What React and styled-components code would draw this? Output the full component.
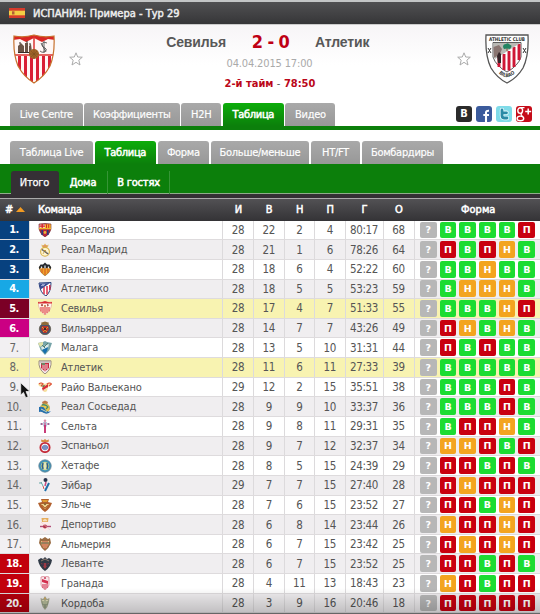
import React from "react";
import styled, { createGlobalStyle } from "styled-components";

const GlobalStyle = createGlobalStyle`
  * {
    box-sizing: border-box;
  }
  body {
    margin: 0;
    background: #fff;
    overflow: hidden;
    font-family: "DejaVu Sans Condensed", "DejaVu Sans", sans-serif;
    font-stretch: condensed;
    font-size: 12px;
    color: #555;
  }
`;

const teams = [
  ["Барселона", 28, 22, 2, 4, "80:17", 68, "ВВВВП", "barcelona"],
  ["Реал Мадрид", 28, 21, 1, 6, "78:26", 64, "ПВПНВ", "real"],
  ["Валенсия", 28, 18, 6, 4, "52:22", 60, "ВВНВВ", "valencia"],
  ["Атлетико", 28, 18, 5, 5, "53:23", 59, "ВНННВ", "atletico"],
  ["Севилья", 28, 17, 4, 7, "51:33", 55, "ВВВНП", "sevilla"],
  ["Вильярреал", 28, 14, 7, 7, "43:26", 49, "ПНВНВ", "villarreal"],
  ["Малага", 28, 13, 5, 10, "31:31", 44, "ПВПВВ", "malaga"],
  ["Атлетик", 28, 11, 6, 11, "27:33", 39, "ВВВВВ", "athletic"],
  ["Райо Вальекано", 29, 12, 2, 15, "35:51", 38, "ВВВПВ", "rayo"],
  ["Реал Сосьедад", 28, 9, 9, 10, "33:37", 36, "ВВВПВ", "sociedad"],
  ["Сельта", 28, 9, 8, 11, "29:31", 35, "ВППНВ", "celta"],
  ["Эспаньол", 28, 9, 7, 12, "32:37", 34, "ННПВП", "espanyol"],
  ["Хетафе", 28, 8, 5, 15, "24:39", 29, "ППВПВ", "getafe"],
  ["Эйбар", 29, 7, 7, 15, "27:40", 28, "ПНППП", "eibar"],
  ["Эльче", 28, 7, 6, 15, "23:52", 27, "ППВНП", "elche"],
  ["Депортиво", 28, 6, 8, 14, "23:44", 26, "НППНП", "deportivo"],
  ["Альмерия", 28, 6, 7, 15, "23:42", 25, "ПНПНП", "almeria"],
  ["Леванте", 28, 6, 7, 15, "23:52", 25, "ППВПВ", "levante"],
  ["Гранада", 28, 4, 11, 13, "18:43", 23, "НПВПП", "granada"],
  ["Кордоба", 28, 3, 9, 16, "20:46", 18, "ППППП", "cordoba"],
];

const rankColors = {
  1: "#07417f",
  2: "#07417f",
  3: "#07417f",
  4: "#18a8e5",
  5: "#7b0026",
  6: "#cb0083",
  18: "#c2000d",
  19: "#c2000d",
  20: "#b5000d",
};

const formColors = { В: "#1cdc32", Н: "#f3a41f", П: "#c9000f", "?": "#b7b7b7" };

const shield = "M1 1Q7 0 13 1V6Q12 11 7 14Q2 11 1 6Z";

const crests = {
  barcelona: (
    <>
      <path d={shield} fill="#b5243c" stroke="#6b2b2b" strokeWidth=".6" />
      <path d="M1.5 1.5H7V5H1.5Z" fill="#f4d5c0" />
      <path d="M4.2 1V5.5M1.5 3.2H7" stroke="#d8202c" strokeWidth="1.3" />
      <path d="M7 1.3h5.7V5H7Z" fill="#f3c22c" />
      <path d="M8.5 1.3V5M10.7 1.3V5" stroke="#d8202c" />
      <path d="M1 5.6H13" stroke="#efb72b" strokeWidth="1.4" />
      <path d="M4.2 7V12M9.8 7V12" stroke="#263d7d" strokeWidth="1.6" />
      <circle cx="7" cy="9.5" r="1.4" fill="#e8b53a" />
    </>
  ),
  real: (
    <>
      <circle cx="7" cy="8.8" r="4.4" fill="#fff5cf" stroke="#d8b247" strokeWidth="1.1" />
      <path d="M4 6.5L10.2 11" stroke="#42517d" strokeWidth="1.5" />
      <path d="M5 11L7 7L9 11M5 7.5h3" stroke="#b98e31" strokeWidth=".7" fill="none" />
      <path d="M4 4L3.4 1.6L5.4 2.4L7 .5L8.6 2.4L10.6 1.6L10 4Z" fill="#e4bb63" />
      <path d="M5 3H9" stroke="#d66a59" strokeWidth=".8" />
    </>
  ),
  valencia: (
    <>
      <path d="M1 5Q7 2 13 5Q13 10 7 14Q1 10 1 5Z" fill="#f0a42c" stroke="#77633e" strokeWidth=".5" />
      <path d="M4 6V11M7 5V13M10 6V11" stroke="#d65b22" strokeWidth="1.1" />
      <path d="M1 5L2.5 2.5L5 2.5L7 .5L9 2.5L11.5 2.5L13 5L13 7L10.5 5.5L7 6.5L3.5 5.5L1 7Z" fill="#25282d" />
      <path d="M3.5 4.5V6.5M7 3.5V6.5M10.5 4.5V6.5" stroke="#e9f0f4" strokeWidth="1.2" fill="none" />
    </>
  ),
  atletico: (
    <>
      <path d="M1 1L13 .5Q13 10 8 14Q2 11 1 1Z" fill="#fff" stroke="#29417d" strokeWidth="1" />
      <path d="M6 5V12M9 4V12.5M11.8 3V8" stroke="#dc3049" strokeWidth="1.5" />
      <path d="M1.5 1.5L12 1L2.2 7.7Z" fill="#394a91" />
      <path d="M3 3.6h3M4 2.6h3" stroke="#d1d8ee" strokeWidth=".7" />
    </>
  ),
  sevilla: (
    <>
      <path d="M0 1Q3 2 7 0Q11 2 14 1Q13.5 10 7 14Q.5 10 0 1Z" fill="#fff4ec" stroke="#dfa19b" strokeWidth=".6" />
      <path d="M0 1Q3 2 7 0Q11 2 14 1V2.5H0Z" fill="#d92c31" />
      <path d="M3 6V10.5M5 6V12M7 6V13.5M9 6V12M11 6V10.5" stroke="#dc3939" strokeWidth="1.1" />
      <circle cx="4" cy="4.2" r="1.1" fill="#a8534a" />
      <path d="M9 3.5q3 .5 0 1.6" stroke="#9c3634" fill="none" />
      <circle cx="7" cy="5" r="1" fill="#c46b37" />
    </>
  ),
  villarreal: (
    <>
      <circle cx="7" cy="8" r="5.7" fill="#47566e" stroke="#5e5443" strokeWidth=".7" />
      <path d="M3 1.8L7 .5L11 1.8L10 4H4Z" fill="#8d6a3a" />
      <path d="M4 5H10L11 8L8.5 12H5.5L3 8Z" fill="#b9352d" />
      <path d="M4 6L9 11M10 6L5 11" stroke="#e7a527" strokeWidth=".9" />
      <circle cx="7" cy="8" r="1.2" fill="#312936" />
    </>
  ),
  malaga: (
    <>
      <path d="M0 2L5 1L7 0L9 1L14 2L11.5 9L7 14L2.5 9Z" fill="#77a4a9" />
      <path d="M0 2L5 1L5 4L2 6Z" fill="#e1e1a7" />
      <path d="M3 6L11 3L10 7L4 9Z" fill="#d9e9e8" />
      <path d="M4 9L10 6L9 10L7 13Z" fill="#176fae" />
      <path d="M4 4L7 7M10 2L6 6" stroke="#568072" />
    </>
  ),
  athletic: (
    <>
      <path d="M1 .8H13Q14 9 7 14Q0 9 1 .8Z" fill="#f4eaea" stroke="#84766f" strokeWidth=".8" />
      <path d="M3 3H11V8L7 11.5L3 8Z" fill="#c8283f" />
      <path d="M5 4V9M7 4V11M9 4V9" stroke="#fff" strokeWidth=".8" />
      <path d="M3 3H7V5H4Z" fill="#6e8967" />
      <path d="M2 2H12" stroke="#9a918a" strokeWidth=".8" />
    </>
  ),
  rayo: (
    <>
      <path d="M0 4Q3 1 7 4Q11 1 14 4Q12 7 10 7L9 11Q7 13 5 11L4 7Q1 7 0 4Z" fill="#f6e1a0" />
      <path d="M1 4Q3 2 5 4L3 6M9 4Q12 2 13.5 4L11 6" fill="none" stroke="#df503c" strokeWidth="1.1" />
      <path d="M4 8L10 4V7L5 11Z" fill="#d72d37" />
      <path d="M3 6L7 5L6 7Z" fill="#4e603e" />
      <path d="M5 10.5L9 8" stroke="#fff7df" strokeWidth=".7" />
    </>
  ),
  sociedad: (
    <>
      <path d="M4 2L7 .5L10 2L9.2 4H4.8Z" fill="#bd7948" />
      <circle cx="7" cy="8" r="4.6" fill="#e9c84b" stroke="#ad9040" strokeWidth=".5" />
      <path d="M1 7Q6 6 7 9Q9 13 13 11Q10 15 6 13Q3 11 1 12Z" fill="#2770ae" />
      <path d="M4 5Q8 4 10 7L8 9" fill="none" stroke="#438b73" strokeWidth="1.3" />
      <path d="M3 9L9 12" stroke="#f2f0bb" strokeWidth=".8" />
    </>
  ),
  celta: (
    <>
      <path d="M5 3H9V7L7 9L5 7Z" fill="#b9cfe6" />
      <path d="M7 6V14" stroke="#c4286a" strokeWidth="1.8" />
      <path d="M3.2 5H5M9 5H10.8M7 3.5V6" stroke="#d24a7c" strokeWidth="1.2" />
      <circle cx="7" cy="1.8" r="1.3" fill="#d98ca8" />
      <circle cx="3.4" cy="5" r="1" fill="#8c6a95" />
      <circle cx="10.6" cy="5" r="1" fill="#8c6a95" />
    </>
  ),
  espanyol: (
    <>
      <path d="M3.5 3L3 .5L5.4 1.2L7 0L8.6 1.2L11 .5L10.5 3Z" fill="#d88942" />
      <circle cx="7" cy="8.5" r="4.6" fill="#fff" stroke="#c42a38" strokeWidth="1.9" />
      <circle cx="7" cy="8.5" r="2.8" fill="#3b62ad" />
      <path d="M6 6V11M8 6V11" stroke="#f0e8ec" strokeWidth=".7" />
    </>
  ),
  getafe: (
    <>
      <circle cx="7" cy="7" r="6.2" fill="#3c93bb" stroke="#6a8593" strokeWidth=".8" />
      <circle cx="7" cy="7" r="4.3" fill="#bdc783" />
      <path d="M5 4Q3.5 7 5 10M9 4Q10.5 7 9 10" stroke="#285e99" fill="none" strokeWidth="1.5" />
      <path d="M7 3.5V10.5" stroke="#f2f2d5" strokeWidth="1.4" />
    </>
  ),
  eibar: (
    <>
      <path d="M2 4H11L10 8L7 14L3 8Z" fill="#eff7fa" />
      <path d="M3 4L5 8M1 5H4" stroke="#69a7a5" />
      <circle cx="7.5" cy="2" r="2" fill="#26314a" />
      <path d="M8 4L7 8" stroke="#c94c7e" strokeWidth="1.6" />
      <path d="M11 5L7 13" stroke="#206ea8" strokeWidth="2" />
      <path d="M5 8L6 11" stroke="#d44c4b" />
    </>
  ),
  elche: (
    <>
      <path d="M3 1H11L10 4L14 5Q12 11 7 14Q2 11 0 5L4 4Z" fill="#b1602d" />
      <path d="M3 6H11L7 11Z" fill="#eed391" />
      <path d="M4 2H10L9 4H5Z" fill="#df9b31" />
      <path d="M4 7L7 10L10 7" stroke="#b77235" fill="none" />
      <circle cx="7" cy="6" r="1.2" fill="#8f6a37" />
    </>
  ),
  deportivo: (
    <>
      <path d="M3.5 0H10.5L10 4H4Z" fill="#e5ad5d" />
      <path d="M5 2L7 .8L9 2V3.2H5Z" fill="#f8ddb5" />
      <path d="M2 4H12Q12 11 7 14Q2 11 2 4Z" fill="#fbeaea" />
      <path d="M2 8.5H13" stroke="#b34e78" strokeWidth="1.4" />
      <circle cx="7" cy="8.5" r="2" fill="#b2354a" />
      <path d="M3 4L12 12" stroke="#f3c5c4" strokeWidth=".6" />
    </>
  ),
  almeria: (
    <>
      <path d="M2 1L4 2L7 0L10 2L12 1L13 6Q11 11 7 14Q3 11 1 6Z" fill="#9a6c43" />
      <path d="M3 4H11L10 9L7 12L4 9Z" fill="#e5c883" />
      <path d="M5 4V10M7 4V12M9 4V10" stroke="#bb3438" strokeWidth=".9" />
      <path d="M3 6H11" stroke="#5f7758" />
    </>
  ),
  levante: (
    <>
      <path d="M0 3L3 1L5 2L7 0L9 2L11 1L14 3Q13 10 7 14Q1 10 0 3Z" fill="#303a46" />
      <path d="M3 6H11L7 12Z" fill="#9d3a44" />
      <path d="M5 6V9M9 6V9" stroke="#26334c" strokeWidth="1.3" />
      <path d="M3 4L7 2L11 4" stroke="#bb9a83" strokeWidth=".7" fill="none" />
    </>
  ),
  granada: (
    <>
      <path d="M3 1L7 0L11 1V9Q10 12 7 14Q4 12 3 9Z" fill="#f7e7ea" stroke="#d97987" strokeWidth=".7" />
      <path d="M4 3L10 5V8L4 6Z" fill="#d4304e" />
      <path d="M5 8V12M7 8V13M9 8V12" stroke="#d4304e" strokeWidth="1.1" />
      <circle cx="7" cy="2" r="1.1" fill="#cd4563" />
    </>
  ),
  cordoba: (
    <>
      <path d="M2.5 2L5 3L7 0L9 3L11.5 2L11 6Q10 11 7 14Q4 11 3 6Z" fill="#a8aa91" />
      <path d="M4 4H10L9 8H5Z" fill="#e3ddb8" />
      <path d="M5 5V9M7 4V12M9 5V9" stroke="#718c6c" strokeWidth=".8" />
      <circle cx="7" cy="2.5" r="1" fill="#cda65a" />
    </>
  ),
};

function SevillaCrest() {
  return (
    <svg width="42" height="50" viewBox="0 0 42 50">
      <defs>
        <clipPath id="sevilla">
          <path d="M1 2Q11 4 21 1Q31 4 41 2Q42 20 37 32Q31 43 21 49Q11 43 5 32Q0 20 1 2Z" />
        </clipPath>
      </defs>
      <g clipPath="url(#sevilla)">
        <path d="M0 0H42V50H0Z" fill="#fff7f5" />
        <path d="M0 0H42V6L35 5L29 8L21 4L13 8L7 5L0 6Z" fill="#d92624" />
        <path d="M21 1V21M1 21H41" stroke="#db3431" strokeWidth="1.5" />
        <path d="M6.5 22V50M12.5 22V50M18.5 22V50M24.5 22V50M30.5 22V50M36.5 22V50" stroke="#d91f35" strokeWidth="3" />
      </g>
      <path d="M5 18V12L8 9L11 12V18M12 18V9H15V18M16 18V12L18 10L19 18Z" fill="#6b5547" />
      <path d="M5 18.5H19M7 10V8M14 9V7M17 11V9" stroke="#332b27" />
      <path d="M34 9Q29 7 29 11Q29 13 32 14Q35 16 31 18Q29 19 27 17M28 9L33 18M31 7V19" stroke="#555" strokeWidth=".9" fill="none" />
      <circle cx="21" cy="20" r="5" fill="#a26527" />
      <path d="M18 17L24 23M24 17L18 23M21 15V25M16 20H26" stroke="#7d4e20" strokeWidth=".6" />
      <path d="M1 2Q11 4 21 1Q31 4 41 2Q42 20 37 32Q31 43 21 49Q11 43 5 32Q0 20 1 2Z" fill="none" stroke="#c7712d" strokeWidth="1.2" />
    </svg>
  );
}

function AthleticCrest() {
  return (
    <svg width="44" height="50" viewBox="0 0 44 50">
      <path d="M1 1H43Q44 22 38 34Q32 44 22 49Q12 44 6 34Q0 22 1 1Z" fill="#fff" stroke="#555" strokeWidth="1.3" />
      <path d="M8 8.5H36V23Q33 32 22 38Q11 32 8 23Z" fill="#fff" stroke="#333" strokeWidth=".8" />
      <path d="M14 23V33M19 20V36M24 17V36.5M29 13V33M34 10V26" stroke="#cf1735" strokeWidth="2.9" />
      <path d="M8.5 9H35.5L10 25Z" fill="#babab5" />
      <path d="M8.5 13L14 11L17 15L15 20L9 24Z" fill="#897571" />
      <path d="M12 22L14 18L16 20V29L13 29Z" fill="#352529" />
      <path d="M22 17V11" stroke="#785a38" />
      <path d="M18 13Q18 10 21 10Q23 8 25 11Q28 11 25 15Q22 14 19 15Z" fill="#238462" />
      <path d="M3 14L6 19M6 14L3 19M38 14L41 19M41 14L38 19" stroke="#333" />
      <text x="4" y="7" fontSize="5" fontWeight="bold" fill="#333" textLength="36" lengthAdjust="spacingAndGlyphs">ATHLETIC CLUB</text>
      <path id="bilbao" d="M12.5 38Q22 49 33 36" fill="none" />
      <text fontSize="5" fontWeight="bold" fill="#444">
        <textPath href="#bilbao" startOffset="1.5">BILBAO</textPath>
      </text>
    </svg>
  );
}

const Star = () => (
  <svg width="14" height="14" viewBox="0 0 14 14" fill="#fff" stroke="#aaa" strokeWidth="1">
    <path d="M7 .8L8.7 5L13.3 5.2L9.8 8.2L11 13L7 10.3L3 13L4.2 8.2L.7 5.2L5.3 5Z" />
  </svg>
);

function SocialIcons() {
  return (
    <Socials>
      <Social $bg="#2b2b2b">B</Social>
      <Social $bg="#3b5b9c">
        <svg width="16" height="16" viewBox="0 0 16 16">
          <path d="M10 16V6.5Q10 4.5 13 4.7M7.3 9H13" stroke="#fff" strokeWidth="2.1" fill="none" />
        </svg>
      </Social>
      <Social $bg="#7fdbe8">
        <svg width="16" height="16" viewBox="0 0 16 16">
          <path d="M6 4V9.5Q6 12 8.5 12H11M6 6.8H10.5" stroke="#e9fbff" strokeWidth="4.4" strokeLinecap="round" fill="none" />
          <path d="M6 4V9.5Q6 12 8.5 12H11M6 6.8H10.5" stroke="#2b8ba6" strokeWidth="2.8" strokeLinecap="round" fill="none" />
        </svg>
      </Social>
      <Social $bg="#c60c19">
        <svg width="16" height="16" viewBox="0 0 16 16" fill="none" stroke="#fff">
          <ellipse cx="4.2" cy="4.6" rx="2.4" ry="2.8" strokeWidth="1.4" />
          <path d="M4.5 1.6H8.5M6 7Q4 8.3 6.3 9.8" strokeWidth="1.3" />
          <ellipse cx="4.4" cy="12.4" rx="3.3" ry="2.3" strokeWidth="1.4" />
          <path d="M12.2 2.5V8.5M9.2 5.5H15.2" strokeWidth="1.5" />
        </svg>
      </Social>
    </Socials>
  );
}

export default function App() {
  return (
    <Page>
      <GlobalStyle />
      <LeagueBar>
        <svg width="16" height="10" viewBox="0 0 16 10">
          <path d="M0 0H16V10H0Z" fill="#d53b2c" />
          <path d="M0 2.7H16V7.3H0Z" fill="#f3ce45" />
          <path d="M3 3.3H5.5V6.5H3Z" fill="#b35e35" />
        </svg>
        <span>ИСПАНИЯ: Примера - Тур 29</span>
      </LeagueBar>

      <MatchHeader>
        <SevillaCrest />
        <Star />
        <Score>
          <TeamName $side="right">Севилья</TeamName>
          <Goals>2 - 0</Goals>
          <TeamName>Атлетик</TeamName>
          <Kickoff>04.04.2015 17:00</Kickoff>
          <Clock>
            2-й тайм <i>-</i> 78:50
          </Clock>
        </Score>
        <Star />
        <AthleticCrest />
      </MatchHeader>

      <MainTabs>
        <Tab $w={72.5}>Live Centre</Tab>
        <Tab $w={95.5}>Коэффициенты</Tab>
        <Tab $w={40}>H2H</Tab>
        <Tab $w={61} $active>Таблица</Tab>
        <Tab $w={50}>Видео</Tab>
        <SocialIcons />
      </MainTabs>

      <SubTabs>
        <Tab $w={83}>Таблица Live</Tab>
        <Tab $w={61} $active>Таблица</Tab>
        <Tab $w={51.5}>Форма</Tab>
        <Tab $w={98}>Больше/меньше</Tab>
        <Tab $w={49.5}>HT/FT</Tab>
        <Tab $w={81}>Бомбардиры</Tab>
      </SubTabs>

      <Scopes>
        <Scope $w={48} $active>Итого</Scope>
        <Scope $w={49}>Дома</Scope>
        <Scope $w={62}>В гостях</Scope>
      </Scopes>

      <HeadRow>
        <HeadRank>
          #
          <svg width="9" height="5" viewBox="0 0 9 5">
            <path d="M0 5L4.5 0L9 5Z" fill="#f39b22" />
          </svg>
        </HeadRank>
        <HeadTeam>Команда</HeadTeam>
        {["И", "В", "Н", "П", "Г", "О", "Форма"].map((h) => (
          <HeadCell key={h}>{h}</HeadCell>
        ))}
      </HeadRow>

      {teams.map(([name, played, won, drawn, lost, goals, points, form, crest], i) => (
        <Row key={name} $odd={i % 2 === 1} $marked={i === 4 || i === 7}>
          <Rank $bg={rankColors[i + 1]} $odd={i % 2 === 1} $marked={i === 7}>
            {i + 1}.
          </Rank>
          <Team>
            <svg width="14" height="14" viewBox="0 0 14 14">
              {crests[crest]}
            </svg>
            {name}
          </Team>
          {[played, won, drawn, lost, goals, points].map((v, n) => (
            <Cell key={n}>{v}</Cell>
          ))}
          <Form>
            {["?", ...form].map((f, n) => (
              <Result key={n} $bg={formColors[f]}>
                {f}
              </Result>
            ))}
          </Form>
        </Row>
      ))}
      <Shade />
      <Cursor width="12" height="17" viewBox="0 0 12 17">
        <path d="M.7 .7V13L3.5 10.4L5.7 15.8L8.2 14.7L6 9.5H10Z" fill="#111" stroke="#eee" strokeWidth=".8" />
      </Cursor>
    </Page>
  );
}

const Page = styled.main`
  position: relative;
  width: 540px;
  height: 614px;
  overflow: hidden;
  background: #fff;
`;

const LeagueBar = styled.header`
  display: flex;
  align-items: center;
  gap: 8px;
  height: 25px;
  padding: 0 0 0 9px;
  border-top: 2px solid #c3c5c6;
  border-bottom: 1px solid #ccc;
  background: linear-gradient(#505052, #363638);
  color: #eee;
  font-size: 11px;
  white-space: nowrap;
  -webkit-text-stroke: 0.45px #eee;
`;

const MatchHeader = styled.section`
  display: grid;
  grid-template-columns: 42px 14px 1fr 14px 44px;
  column-gap: 14px;
  height: 77px;
  padding: 9px 11px 0 13px;
  background: linear-gradient(#f7f5f7, #fff 40px);
  > svg:nth-child(2),
  > svg:nth-child(4) {
    margin-top: 18px;
  }
`;

const Score = styled.div`
  display: grid;
  grid-template-columns: 129px 89px 1fr;
  grid-template-rows: 19px 20px 21px;
  align-items: center;
  text-align: center;
  white-space: nowrap;
`;

const TeamName = styled.h2`
  margin: -4px 0 0;
  font-family: "Liberation Sans", Arial, sans-serif;
  font-size: 14px;
  letter-spacing: -0.15px;
  color: #585858;
  text-align: ${(p) => p.$side || "left"};
`;

const Goals = styled.strong`
  margin-top: -4px;
  font-size: 18px;
  letter-spacing: -0.6px;
  color: #bf0014;
`;

const Kickoff = styled.span`
  grid-column: 1 / 4;
  padding-right: 1px;
  font-size: 11px;
  letter-spacing: -0.15px;
  color: #aaa;
`;

const Clock = styled.b`
  grid-column: 1 / 4;
  padding-right: 0;
  font-size: 11px;
  color: #bb0719;
  i {
    font-style: normal;
    font-weight: normal;
    color: #555;
  }
`;

const MainTabs = styled.nav`
  display: flex;
  align-items: flex-end;
  gap: 1.6px;
  height: 28px;
  padding-left: 10px;
  border-bottom: 4px solid #0c7f0b;
`;

const SubTabs = styled.nav`
  display: flex;
  align-items: flex-end;
  gap: 1.8px;
  height: 34px;
  padding-left: 10px;
`;

const Tab = styled.div`
  display: flex;
  align-items: center;
  justify-content: center;
  width: ${(p) => p.$w}px;
  height: 23px;
  border-radius: 3px 3px 0 0;
  background: ${(p) => (p.$active ? "linear-gradient(#0cad0a, #0c7f0b)" : "linear-gradient(#a9a9a9, #989898)")};
  color: #fff;
  font-size: 11px;
  letter-spacing: -0.3px;
  -webkit-text-stroke: ${(p) => (p.$active ? "0.5px #fff" : "0.15px #fff")};
  white-space: nowrap;
`;

const Socials = styled.div`
  display: flex;
  align-self: center;
  gap: 4px;
  margin: -1px 0 0 auto;
  padding-right: 8px;
`;

const Social = styled.span`
  display: grid;
  place-items: center;
  width: 16px;
  height: 16px;
  border-radius: 3px;
  overflow: hidden;
  background: ${(p) => p.$bg};
  color: #fff;
  font-weight: bold;
  font-size: 11px;
`;

const Scopes = styled.nav`
  display: flex;
  align-items: flex-end;
  height: 34px;
  padding-left: 11px;
  border-bottom: 4px solid #343034;
  background: #0c7f0b;
  box-shadow: inset 0 -1px #8fae8b;
`;

const Scope = styled.div`
  display: flex;
  align-items: center;
  justify-content: center;
  width: ${(p) => p.$w}px;
  height: 23px;
  border-right: 1px solid ${(p) => (p.$active ? "#353035" : "#369536")};
  border-radius: ${(p) => (p.$active ? "3px 3px 0 0" : "0")};
  background: ${(p) => (p.$active ? "#353035" : "none")};
  color: #fff;
  font-size: 11px;
  letter-spacing: -0.2px;
  -webkit-text-stroke: ${(p) => (p.$active ? "0.25px #fff" : "0.5px #fff")};
`;

const HeadRow = styled.div`
  display: grid;
  grid-template-columns: 30px 193px 31px 30.5px 30.5px 30.5px 38px 31px 1fr;
  align-items: center;
  height: 22.6px;
  border-top: 1px solid #aaa;
  background: linear-gradient(#525154, #343336);
  color: #fff;
  font-size: 11px;
  -webkit-text-stroke: 0.5px #fff;
`;

const HeadRank = styled.div`
  display: flex;
  align-items: center;
  gap: 3px;
  padding-left: 5px;
  svg {
    -webkit-text-stroke: 0;
  }
`;

const HeadTeam = styled.div`
  padding-left: 8px;
  letter-spacing: -0.3px;
`;

const HeadCell = styled.div`
  text-align: center;
  &:last-child {
    padding-left: 2px;
  }
`;

const Row = styled.div`
  display: grid;
  grid-template-columns: 30px 193px 31px 30.5px 30.5px 30.5px 38px 31px 1fr;
  height: 19.65px;
  border-bottom: 1px solid #dedbdd;
  background: ${(p) => (p.$marked ? "#f8f3b1" : p.$odd ? "#f0eef0" : "#fff")};
`;

const Rank = styled.div`
  display: flex;
  align-items: center;
  justify-content: center;
  padding-right: 1px;
  border-right: 1px solid #ddd;
  background: ${(p) => p.$bg || (p.$marked ? "#f8f3b1" : p.$odd ? "#e2e0e2" : "#f2f0f2")};
  color: ${(p) => (p.$bg ? "#fff" : "#666")};
  font-weight: ${(p) => (p.$bg ? "bold" : "normal")};
  font-size: ${(p) => (p.$bg ? "11px" : "11.5px")};
  letter-spacing: -0.5px;
`;

const Team = styled.div`
  display: flex;
  align-items: center;
  gap: 9px;
  padding-left: 8px;
  border-right: 1px solid #dcdadc;
  font-size: 11px;
  letter-spacing: -0.2px;
  white-space: nowrap;
`;

const Cell = styled.div`
  display: flex;
  align-items: center;
  justify-content: center;
  border-right: 1px solid #dcdadc;
  font-size: 11.5px;
  letter-spacing: -0.4px;
`;

const Form = styled.div`
  display: flex;
  align-items: center;
  gap: 3px;
  padding-left: 5.5px;
`;

const Result = styled.span`
  display: grid;
  place-items: center;
  width: 16.7px;
  height: 16.7px;
  border-radius: 2px;
  background: ${(p) => p.$bg};
  color: #fff;
  font: bold 9.5px "DejaVu Sans", sans-serif;
`;

const Shade = styled.div`
  position: absolute;
  inset: auto 0 0;
  height: 26px;
  border-bottom: 1px solid #666;
  background: linear-gradient(rgba(0, 0, 0, 0), rgba(0, 0, 0, 0.2));
  pointer-events: none;
`;

const Cursor = styled.svg`
  position: absolute;
  left: 20px;
  top: 382px;
`;
